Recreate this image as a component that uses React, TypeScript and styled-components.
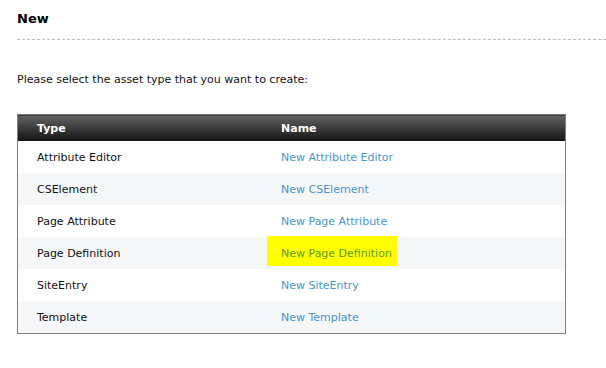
import React from 'react'
import styled, { createGlobalStyle } from 'styled-components'

interface IAssetRow {
    type: string;
    name: string;
    marked?: boolean;
}

const rows: IAssetRow[] = [
    { type: 'Attribute Editor', name: 'New Attribute Editor' },
    { type: 'CSElement', name: 'New CSElement' },
    { type: 'Page Attribute', name: 'New Page Attribute' },
    { type: 'Page Definition', name: 'New Page Definition', marked: true },
    { type: 'SiteEntry', name: 'New SiteEntry' },
    { type: 'Template', name: 'New Template' },
]

const GlobalStyle = createGlobalStyle`
    html, body {
        margin: 0;
        padding: 0;
        background: #ffffff;
    }
    body {
        font-family: "DejaVu Sans", Tahoma, Verdana, sans-serif;
        font-size: 11px;
        color: #111111;
    }
`

const Page = styled.div`
    padding: 9px 0 0 17px;
`

const Title = styled.h1`
    margin: 0;
    font-size: 13px;
    line-height: 20px;
    font-weight: bold;
    color: #000000;
    padding-bottom: 10px;
    border-bottom: 1px dashed #bcbcbc;
`

const Intro = styled.p`
    margin: 33px 0 0;
    line-height: 14px;
`

const AssetTable = styled.table`
    margin-top: 27px;
    width: 549px;
    border-collapse: collapse;
    border: 1px solid #808080;
`

const HeadCell = styled.th`
    height: 25px;
    padding: 1px 0 0 19px;
    text-align: left;
    color: #ffffff;
    font-weight: bold;
    font-size: 11px;
    background: linear-gradient(#636363, #3a3a3a 50%, #141414);
    border-top: 1px solid #7a7a7a;
    &:first-child {
        width: 225px;
    }
`

const Row = styled.tr<{ $alt: boolean }>`
    height: 32px;
    background: ${p => (p.$alt ? '#f4f6f8' : '#ffffff')};
`

const Cell = styled.td`
    padding: 2px 0 0 19px;
    line-height: 14px;
`

const NameLink = styled.a<{ $marked?: boolean }>`
    color: ${p => (p.$marked ? '#5f9a14' : '#4a94cc')};
    text-decoration: none;
    cursor: pointer;
    ${p => p.$marked && `
        display: inline-block;
        background: #ffff00;
        padding: 11px 5px 5px 14px;
        margin: -11px 0 -5px -14px;
    `}
`

const App: React.FC = () => {
  return (
    <>
      <GlobalStyle />
      <Page>
        <Title>New</Title>
        <Intro>Please select the asset type that you want to create:</Intro>
        <AssetTable>
          <thead>
            <tr>
              <HeadCell>Type</HeadCell>
              <HeadCell>Name</HeadCell>
            </tr>
          </thead>
          <tbody>
            {rows.map((row, i) => (
              <Row key={row.type} $alt={i % 2 === 1}>
                <Cell>{row.type}</Cell>
                <Cell>
                  <NameLink $marked={row.marked}>{row.name}</NameLink>
                </Cell>
              </Row>
            ))}
          </tbody>
        </AssetTable>
      </Page>
    </>
  )
}

export default App
